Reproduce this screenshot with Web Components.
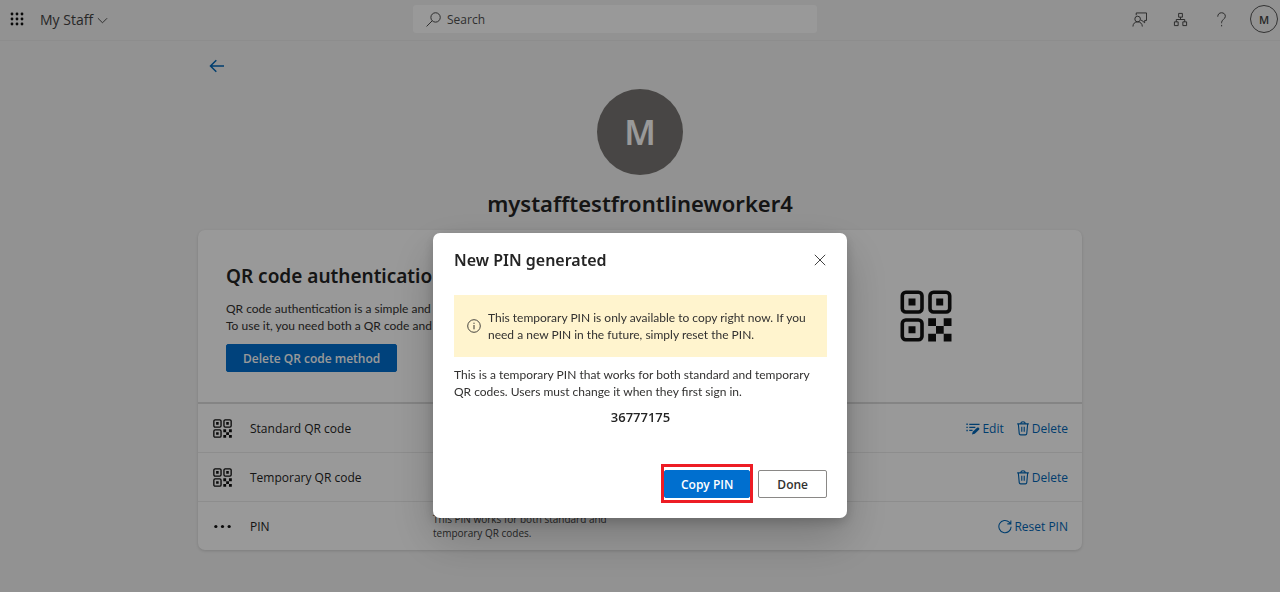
<!DOCTYPE html>
<html lang="en">
<head>
<meta charset="utf-8">
<meta name="viewport" content="width=device-width, initial-scale=1">
<title>My Staff</title>
<style>
  html, body { margin: 0; min-height: 100%; }
  body {
    --heading-font: "Noto Sans", "Open Sans", sans-serif;
    --copy-font: 12px/17px Lato, "Open Sans", sans-serif;
    background: #f3f3f3;
    color: #242424;
    font: 12px/17px "Open Sans", "Noto Sans", sans-serif;
  }
</style>
</head>
<body>
<staff-app></staff-app>

<script>
const define = (name, html, setup) => {
  const template = document.createElement('template');
  template.innerHTML = html;
  customElements.define(name, class extends HTMLElement {
    constructor() {
      super();
      this.attachShadow({ mode: 'open' }).append(template.content.cloneNode(true));
    }
    connectedCallback() { if (setup) setup(this, this.shadowRoot); }
  });
};

const icons = {
  waffle: ['0 0 14 14', '<g fill="currentColor">' + [2, 7, 12].map(y => [2, 7, 12].map(x => `<circle cx="${x}" cy="${y}" r="1.4"/>`).join('')).join('') + '</g>'],
  chevron: ['0 0 12 12', '<path d="M1 3.5l5 5 5-5"/>'],
  search: ['0 0 16 16', '<circle cx="10.200" cy="5.800" r="5"/><path d="M6.600 9.400L.6 15.400"/>'],
  feedback: ['0 0 16 16', '<path d="M4.500 3.500V1h11v8h-2v2.500L10.500 9H9.500"/><circle cx="6" cy="7.500" r="3"/><path d="M1 15.500c0-3 2-5 5-5s5 2 5 5"/>'],
  org: ['0 0 16 16', '<path d="M6 1.500h4v4H6zM1.500 10.500h4v4h-4zM10.500 10.500h4v4h-4zM8 5.500V8M3.500 10.500V8h9v2.500"/>'],
  help: ['0 0 16 16', '<path d="M4 5C4 2.500 5.600.8 8 .8s4.100 1.500 4.100 3.800c0 3.200-4 3.400-4 6.400v1"/><path d="M8.100 13.800v1.500"/>'],
  back: ['0 0 16 14', '<path stroke-width="1.500" d="M7.300 1.300L1.500 7l5.800 5.700M1.500 7H15"/>'],
  close: ['0 0 12 12', '<path d="M.8.8l10.400 10.400M11.200.8L.8 11.200"/>'],
  info: ['0 0 14 14', '<circle cx="7" cy="7" r="6.300" stroke-width=".9"/><path d="M7 6v4.300M7 3.700v1.200"/>'],
  trash: ['0 0 14 16', '<path stroke-width="1.200" d="M.8 3h12.400M4.600 3c0-3 4.800-3 4.800 0M2 3l1 10.500c.1.900.6 1.300 1.400 1.300h5.200c.8 0 1.300-.4 1.400-1.300L12 3M5.700 6v5.500M8.300 6v5.500"/>'],
  edit: ['0 0 15 14', '<path stroke-width="1.300" d="M3.500 2.500H14.500M3.500 5.800H10M3.500 9.100H7"/><path stroke-width="1.500" d="M.4 2.500h1.500M.4 5.800h1.500M.4 9.100h1.500"/><path fill="currentColor" stroke="none" d="M7.200 10.500l4.600-4.200c1.500-1.200 3.300.6 2.100 2L9.400 12.600l-3 .9z"/>'],
  reset: ['0 0 16 16', '<path stroke-width="1.200" d="M15 8.200a7 7 0 1 1-2.200-5.200L14.600 4.800M14.700 1V5h-4"/>'],
  dots: ['0 0 20 20', '<g fill="currentColor"><circle cx="3" cy="10" r="1.700"/><circle cx="10" cy="10" r="1.700"/><circle cx="17" cy="10" r="1.700"/></g>'],
  qr: ['0 0 52 52', '<g stroke-width="3.600"><rect x="2.300" y="2.300" width="19.700" height="19.700" rx="3.500"/><rect x="30" y="2.300" width="19.700" height="19.700" rx="3.500"/><rect x="2.300" y="30" width="19.700" height="19.700" rx="3.500"/></g><path fill="currentColor" stroke="none" d="M8.500 8.500h7v7h-7zM36.200 8.500h7v7h-7zM8.500 36.200h7v7h-7zM28.200 28.200h7.800v7.800h-7.800zM43.700 28.200h7.800v7.800h-7.800zM36 36h7.700v7.700H36zM28.200 43.700h7.800v7.800h-7.800zM43.700 43.700h7.800v7.800h-7.800z"/>']
};

define('ui-icon', `
  <style>
    :host { display: inline-flex; flex: none; width: 16px; height: 16px; }
    svg { width: 100%; height: 100%; fill: none; stroke: currentColor; }
    svg g[fill] { stroke: none; }
  </style>
  <svg aria-hidden="true"></svg>`, (host, root) => {
  const [box, art] = icons[host.getAttribute('name')];
  const svg = root.querySelector('svg');
  svg.setAttribute('viewBox', box);
  svg.innerHTML = art;
});

define('suite-header', `
  <style>
    :host {
      display: grid; grid-template-columns: 413fr 404fr 463fr; align-items: center;
      height: 40px; border-bottom: 1px solid #ececec; color: #424242;
    }
    button { display: inline-flex; align-items: center; padding: 0; border: 0; background: none; color: inherit; font: inherit; }
    .brand { display: flex; align-items: center; gap: 16px; padding-left: 10px; }
    .waffle { color: #111; margin-bottom: 2px; }
    .waffle ui-icon { width: 14px; height: 14px; }
    .app { gap: 4px; font-size: 14px; line-height: 20px; font-weight: 500; }
    .app ui-icon { width: 11px; height: 11px; }
    label { display: flex; align-items: center; gap: 6px; height: 28px; padding: 0 13px; margin-bottom: 2px; border-radius: 3px; background: #fff; }
    label ui-icon { width: 15px; height: 15px; }
    input { flex: 1; min-width: 0; padding: 0; border: 0; outline: 0; background: none; font: inherit; color: inherit; }
    input::placeholder { color: #505050; opacity: 1; }
    .tools { display: flex; align-items: center; justify-content: flex-end; gap: 26px; padding-right: 2px; margin-bottom: 2px; }
    .tools ui-icon { width: 15px; height: 15px; }
    .me { justify-content: center; box-sizing: border-box; width: 28px; height: 28px; border: 1px solid #555; border-radius: 50%; font-size: 11px; font-weight: 600; margin-left: -5px; }
  </style>
  <div class="brand">
    <button class="waffle" aria-label="App launcher"><ui-icon name="waffle"></ui-icon></button>
    <button class="app">My Staff <ui-icon name="chevron"></ui-icon></button>
  </div>
  <label><ui-icon name="search"></ui-icon><input type="text" placeholder="Search" aria-label="Search"></label>
  <div class="tools">
    <button aria-label="Feedback"><ui-icon name="feedback"></ui-icon></button>
    <button aria-label="Organization"><ui-icon name="org"></ui-icon></button>
    <button aria-label="Help"><ui-icon name="help"></ui-icon></button>
    <button class="me" aria-label="Account">M</button>
  </div>`);

define('user-profile', `
  <style>
    :host { display: flex; flex-direction: column; align-items: center; font-family: var(--heading-font); }
    .avatar { display: grid; place-items: center; width: 86px; height: 86px; border-radius: 50%; background: #797673; color: #fff; font-size: 34px; line-height: 40px; font-weight: 600; }
    h1 { margin: 12px 0 0; font-size: 22px; line-height: 32px; font-weight: 600; }
  </style>
  <div class="avatar">M</div>
  <h1><slot></slot></h1>`);

define('ui-button', `
  <style>
    :host { display: inline-flex; position: relative; }
    button {
      box-sizing: border-box; height: 28px; padding: 0 18px; border: 1px solid #8a8886; border-radius: 2px;
      background: #fff; color: #323130; font: inherit; font-weight: 600; white-space: nowrap;
    }
    :host([primary]) button { padding: 0 16px; border-color: #006fcf; background: #006fcf; color: #fff; }
    :host([marked])::after { content: ""; position: absolute; inset: -6px -3px -5px; border: 3px solid #ed1c24; }
  </style>
  <button><slot></slot></button>`);

define('method-row', `
  <style>
    :host { display: grid; grid-template-columns: 20px 201px 190px 1fr; align-items: center; height: 48px; padding: 0 14px; border-top: 1px solid #ebebeb; }
    :host([first]) { border-top: 0; }
    ::slotted([slot=icon]) { justify-self: end; width: 19px; height: 19px; color: #111; }
    .name { padding-left: 18px; }
    .note { font-size: 10px; line-height: 14px; color: #424242; }
    .actions { display: flex; justify-content: flex-end; gap: 12px; }
  </style>
  <slot name="icon"></slot>
  <span class="name"><slot name="label"></slot></span>
  <span class="note"><slot name="note"></slot></span>
  <div class="actions"><slot></slot></div>`);

define('action-link', `
  <style>
    :host { display: inline-flex; color: #0067b8; }
    a { display: inline-flex; align-items: center; gap: 2px; color: inherit; text-decoration: none; white-space: nowrap; }
    ::slotted(ui-icon) { width: 14px; height: 15px; }
  </style>
  <a href="#"><slot name="icon"></slot><slot></slot></a>`);

define('method-card', `
  <style>
    :host { display: block; border-radius: 7px; background: #fff; box-shadow: 0 1px 3px rgba(0,0,0,.14); }
    .intro { display: flex; justify-content: space-between; align-items: center; padding: 30px 130px 30px 28px; border-bottom: 2px solid #dcdcdc; }
    h2 { margin: 0 0 8px; font-family: var(--heading-font); font-size: 19px; line-height: 32px; font-weight: 600; }
    p { margin: 0 0 10px; font: var(--copy-font); color: #323130; }
    .intro ui-icon { width: 52px; height: 52px; color: #111; }
  </style>
  <section class="intro">
    <div>
      <h2>QR code authentication</h2>
      <p>QR code authentication is a simple and<br>To use it, you need both a QR code and</p>
      <ui-button primary>Delete QR code method</ui-button>
    </div>
    <ui-icon name="qr"></ui-icon>
  </section>
  <slot></slot>`);

define('pin-dialog', `
  <style>
    :host { position: fixed; inset: 0; display: flex; justify-content: center; align-items: flex-start; padding: 233px 16px 0; background: rgba(0,0,0,.4); overflow: auto; }
    section { box-sizing: border-box; width: 414px; max-width: 100%; padding: 14px 20px 20px 21px; border-radius: 7px; background: #fff; box-shadow: 0 20px 46px rgba(0,0,0,.22), 0 4px 12px rgba(0,0,0,.18); }
    header { display: flex; justify-content: space-between; align-items: center; margin-bottom: 22px; }
    h2 { margin: 0; font-family: var(--heading-font); font-size: 16px; line-height: 26px; font-weight: 600; }
    .close { display: flex; padding: 0; border: 0; background: none; color: #424242; }
    .close ui-icon { width: 12px; height: 12px; margin: 1px; }
    .notice { display: flex; align-items: center; gap: 7px; padding: 14px 13px; background: #fff4ce; color: #323130; font: var(--copy-font); }
    .notice ui-icon { width: 14px; height: 14px; }
    p { margin: 9px 0; font: var(--copy-font); color: #323130; }
    .pin { text-align: center; font-family: "Open Sans", sans-serif; font-weight: 600; font-size: 13px; color: #242424; }
    footer { display: flex; justify-content: flex-end; gap: 8px; margin-top: 44px; }
  </style>
  <section role="dialog" aria-label="New PIN generated">
    <header>
      <h2>New PIN generated</h2>
      <button class="close" aria-label="Close"><ui-icon name="close"></ui-icon></button>
    </header>
    <div class="notice"><ui-icon name="info"></ui-icon><span>This temporary PIN is only available to copy right now. If you<br>need a new PIN in the future, simply reset the PIN.</span></div>
    <p>This is a temporary PIN that works for both standard and temporary<br>QR codes. Users must change it when they first sign in.</p>
    <p class="pin">36777175</p>
    <footer>
      <ui-button primary marked>Copy PIN</ui-button>
      <ui-button>Done</ui-button>
    </footer>
  </section>`);

define('staff-app', `
  <style>
    :host { display: block; }
    main { max-width: 884px; margin: 0 auto; padding: 18px 16px 40px; }
    .back { display: inline-flex; margin-left: 11px; color: #0067b8; vertical-align: top; }
    .back ui-icon { width: 16px; height: 14px; }
    user-profile { margin: 13px 0 11px; }
  </style>
  <suite-header></suite-header>
  <main>
    <a class="back" href="#" aria-label="Back"><ui-icon name="back"></ui-icon></a>
    <user-profile>mystafftestfrontlineworker4</user-profile>
    <method-card>
      <method-row first>
        <ui-icon slot="icon" name="qr"></ui-icon>
        <span slot="label">Standard QR code</span>
        <action-link><ui-icon slot="icon" name="edit"></ui-icon>Edit</action-link>
        <action-link><ui-icon slot="icon" name="trash"></ui-icon>Delete</action-link>
      </method-row>
      <method-row>
        <ui-icon slot="icon" name="qr"></ui-icon>
        <span slot="label">Temporary QR code</span>
        <action-link><ui-icon slot="icon" name="trash"></ui-icon>Delete</action-link>
      </method-row>
      <method-row>
        <ui-icon slot="icon" name="dots"></ui-icon>
        <span slot="label">PIN</span>
        <span slot="note">This PIN works for both standard and temporary QR codes.</span>
        <action-link><ui-icon slot="icon" name="reset"></ui-icon>Reset PIN</action-link>
      </method-row>
    </method-card>
  </main>
  <pin-dialog></pin-dialog>`);
</script>
</body>
</html>
